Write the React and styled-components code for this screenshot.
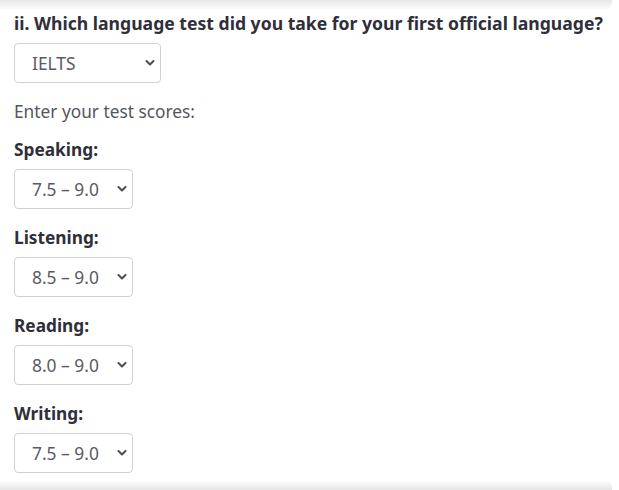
import React from "react";
import styled, { createGlobalStyle } from "styled-components";

const Global = createGlobalStyle`
  html, body { margin: 0; padding: 0; background: #fff; }
  body { font-family: "Noto Sans", "Open Sans", sans-serif; }
`;

const Page = styled.div`
  width: 619px;
  height: 490px;
  display: flex;
  flex-direction: column;
  background: #fff;
  overflow: hidden;
`;

const ShadowBand = styled.div`
  height: ${(p) => p.$h}px;
  width: 612px;
  flex: none;
  background: linear-gradient(
    ${(p) => (p.$top ? "to bottom" : "to top")},
    #e6e6e6 0%,
    #f3f3f3 60%,
    #fbfbfb 100%
  );
  border-radius: ${(p) => (p.$top ? "0 0 6px 0" : "0 6px 0 0")};
`;

const Content = styled.div`
  flex: 1;
  padding: 2px 0 0 14px;
  display: flex;
  flex-direction: column;
`;

const Heading = styled.h2`
  margin: 0;
  font-size: 17.6px;
  font-weight: 700;
  line-height: 24px;
  color: #2f2f3a;
  white-space: nowrap;
`;

const SelectWrap = styled.div`
  position: relative;
  width: ${(p) => p.$w}px;
  height: 40px;
  margin-top: ${(p) => p.$mt}px;
`;

const Select = styled.select`
  appearance: none;
  -webkit-appearance: none;
  box-sizing: border-box;
  width: 100%;
  height: 100%;
  border: 1px solid #d2d2d6;
  border-radius: 4px;
  background: #fff;
  padding: 0 0 0 17px;
  font-family: "Noto Sans", sans-serif;
  font-size: 17.4px;
  color: #5a5a64;
  outline: none;
`;

const Chevron = styled.svg`
  position: absolute;
  right: 6px;
  top: 16px;
  width: 10px;
  height: 8px;
  pointer-events: none;
`;

const Intro = styled.p`
  margin: 17px 0 0;
  font-size: 17.3px;
  line-height: 24px;
  color: #55555d;
`;

const Label = styled.div`
  margin-top: ${(p) => p.$mt}px;
  font-size: 17.3px;
  font-weight: 700;
  line-height: 24px;
  color: #2f2f3a;
`;

function Dropdown({ value, width, mt }) {
  return (
    <SelectWrap $w={width} $mt={mt}>
      <Select defaultValue={value}>
        <option>{value}</option>
      </Select>
      <Chevron viewBox="0 0 10 8">
        <path d="M1.5 2 L5 5.5 L8.5 2" fill="none" stroke="#4a4a52" strokeWidth="2" strokeLinecap="round" strokeLinejoin="round" />
      </Chevron>
    </SelectWrap>
  );
}

const scores = [
  { label: "Speaking:", value: "7.5 – 9.0" },
  { label: "Listening:", value: "8.5 – 9.0" },
  { label: "Reading:", value: "8.0 – 9.0" },
  { label: "Writing:", value: "7.5 – 9.0" },
];

export default function App() {
  return (
    <Page>
      <Global />
      <ShadowBand $top $h={9} />
      <Content>
        <Heading>ii. Which language test did you take for your first official language?</Heading>
        <Dropdown value="IELTS" width={147} mt={8} />
        <Intro>Enter your test scores:</Intro>
        {scores.map((s, i) => (
          <React.Fragment key={s.label}>
            <Label $mt={i === 0 ? 14 : 17}>{s.label}</Label>
            <Dropdown value={s.value} width={119} mt={7} />
          </React.Fragment>
        ))}
      </Content>
      <ShadowBand $h={9} />
    </Page>
  );
}
